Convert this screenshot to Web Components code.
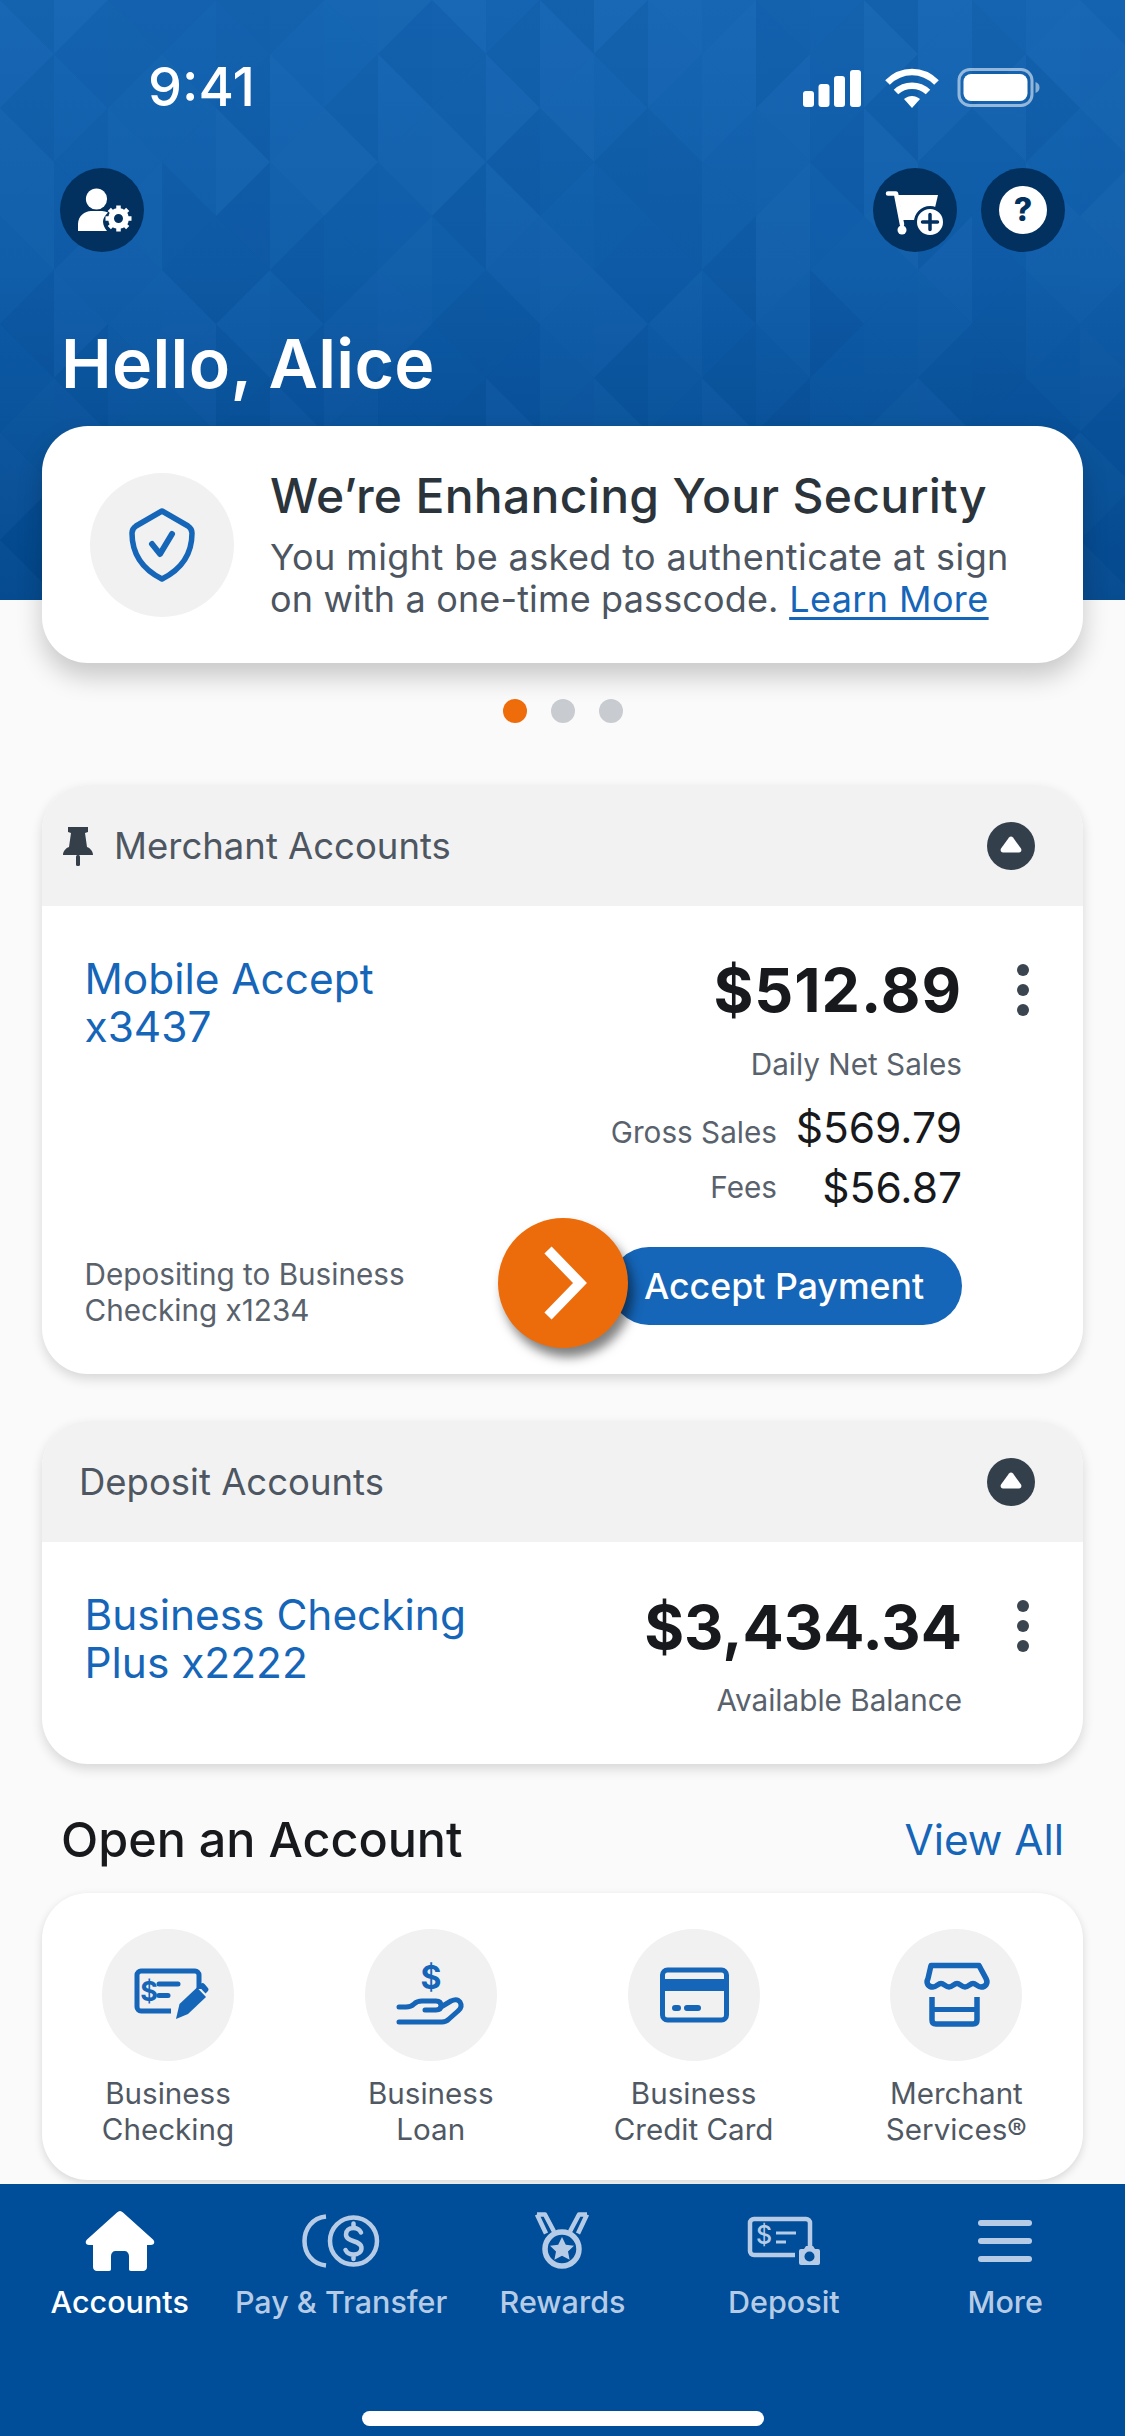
<!DOCTYPE html>
<html lang="en">
<head>
<meta charset="utf-8">
<title>Accounts</title>
<style>
    html, body { margin: 0; padding: 0; }
    body {
        width: 1125px;
        height: 2436px;
        overflow: hidden;
        background: #fafafa;
        font-family: Inter, "Noto Sans", "Liberation Sans", sans-serif;
    }
</style>
</head>
<body>
<app-header name="Alice"></app-header>
<promo-banner>
    <span slot="title">We’re Enhancing Your Security</span>
    <span>You might be asked to authenticate at sign</span><br>
    <span style="letter-spacing:.15px">on with a one-time passcode.</span> <a href="#">Learn More</a>
</promo-banner>
<pager-dots></pager-dots>

<account-card pinned style="--card-top:62px">
    <span slot="heading">Merchant Accounts</span>
    <account-summary style="--pad-bottom:26px;--amount-top:1px;--label-top:22px">
        <span slot="name">Mobile Accept<br>x3437</span>
        <span slot="amount">$512.89</span>
        <span slot="label">Daily Net Sales</span>
        <sale-line label="Gross Sales" value="$569.79" style="margin-top:21px"></sale-line>
        <sale-line label="Fees" value="$56.87" style="margin-top:10px;--lift:-5px"></sale-line>
        <accept-footer>Depositing to Business<br>Checking x1234</accept-footer>
    </account-summary>
</account-card>

<account-card style="--card-top:47px">
    <span slot="heading">Deposit Accounts</span>
    <account-summary style="--pad-bottom:46px;--amount-top:2px;--label-top:21px;--amount-track:0">
        <span slot="name">Business Checking<br>Plus x2222</span>
        <span slot="amount">$3,434.34</span>
        <span slot="label">Available Balance</span>
    </account-summary>
</account-card>

<section-head>
    <span slot="title">Open an Account</span>
    <a slot="action" href="#">View All</a>
</section-head>

<open-panel>
    <product-tile icon="check">Business<br>Checking</product-tile>
    <product-tile icon="loan">Business<br>Loan</product-tile>
    <product-tile icon="card">Business<br>Credit Card</product-tile>
    <product-tile icon="store">Merchant<br>Services®</product-tile>
</open-panel>

<tab-bar>
    <tab-item icon="home" active>Accounts</tab-item>
    <tab-item icon="coins">Pay &amp; Transfer</tab-item>
    <tab-item icon="medal">Rewards</tab-item>
    <tab-item icon="deposit">Deposit</tab-item>
    <tab-item icon="menu">More</tab-item>
</tab-bar>

<script>
const GLYPH = 'font-family="Inter, Liberation Sans, sans-serif"';

const HEADER_ICONS = {
    person: `<circle cx="36.5" cy="31" r="10.6" fill="#fff"/>
        <path d="M18 63V56c0-8 7-13 13-13h11c2 0 4 .5 6 1.500-3 3-5 6-5 9 0 4 2 7 4 9.500z" fill="#fff"/>
        <g fill="none" stroke="#fff"><circle cx="58.500" cy="50.500" r="7.500" stroke-width="6"/>
        <path d="M58.500 37.500v26M45.500 50.500h26M49.300 41.300l18.400 18.400M67.700 41.300L49.300 59.700" stroke-width="4.500" stroke-dasharray="4.500 17 4.500"/></g>`,
    cart: `<path d="M15 25.500h8l6 31" fill="none" stroke="#fff" stroke-width="4.500" stroke-linecap="round" stroke-linejoin="round"/>
        <path d="M25 27h40l-5 21H29z" fill="#fff"/>
        <path d="M29 50h16" stroke="#fff" stroke-width="4"/>
        <circle cx="29" cy="62" r="4.500" fill="#fff"/>
        <circle cx="57" cy="54" r="14.500" fill="#fff" stroke="#02315f" stroke-width="3"/>
        <path d="M57 46.500v15M49.500 54h15" stroke="#02315f" stroke-width="3.500" stroke-linecap="round"/>`,
    help: `<circle cx="42" cy="42" r="24" fill="#fff"/>
        <text x="42" y="53" text-anchor="middle" font-size="32" font-weight="800" fill="#02315f" ${GLYPH}>?</text>`
};

class StatusBar extends HTMLElement {
    constructor() {
        super();
        this.attachShadow({ mode: 'open' });
        this.shadowRoot.innerHTML = `
            <style>
                :host { display: flex; justify-content: space-between; height: 106px; padding: 62px 85px 0 148px; box-sizing: border-box; color: #fff; }
                .time { font-size: 54px; font-weight: 500; line-height: 50px; }
                svg { display: block; margin-top: 5px; }
            </style>
            <div class="time">9:41</div>
            <svg width="237" height="42" viewBox="0 0 237 42">
                <g fill="#fff">
                    <rect x="0" y="24" width="11" height="16" rx="3"/>
                    <rect x="15.500" y="17" width="11" height="23" rx="3"/>
                    <rect x="31" y="9" width="11" height="31" rx="3"/>
                    <rect x="47" y="3" width="11" height="37" rx="3"/>
                </g>
                <g fill="none" stroke="#fff" stroke-width="6.500">
                    <path d="M84.500 15.500c14-14 35-14 49 0"/>
                    <path d="M93 25c9-8.500 23-8.500 32 0"/>
                </g>
                <path d="M101 32c5-4 11-4 16 0l-8 9z" fill="#fff"/>
                <rect x="156" y="2.500" width="73" height="36" rx="11" fill="none" stroke="#fff" stroke-opacity=".55" stroke-width="3"/>
                <rect x="160.500" y="7" width="64" height="27" rx="7.500" fill="#fff"/>
                <path d="M232.500 15c3 1 4 3 4 5.500s-1 4.500-4 5.500z" fill="#fff" fill-opacity=".5"/>
            </svg>
        `;
    }
}

class IconButton extends HTMLElement {
    constructor() {
        super();
        this.attachShadow({ mode: 'open' });
        this.shadowRoot.innerHTML = `
            <style>
                :host { display: block; width: 84px; height: 84px; border-radius: 50%; background: #02315f; }
                svg { display: block; }
            </style>
            <svg width="84" height="84" viewBox="0 0 84 84">${HEADER_ICONS[this.getAttribute('icon')]}</svg>
        `;
    }
}

class AppHeader extends HTMLElement {
    constructor() {
        super();
        this.attachShadow({ mode: 'open' });
        this.shadowRoot.innerHTML = `
            <style>
                :host {
                    display: block;
                    position: relative;
                    height: 600px;
                    overflow: hidden;
                    color: #fff;
                    background: linear-gradient(180deg, #1565b2 0%, #0f5ca8 45%, #03478b 100%);
                }
                .facets { position: absolute; inset: 0; }
                .content { position: relative; }
                .bar { display: flex; justify-content: space-between; margin-top: 62px; padding: 0 60px; }
                .right { display: flex; gap: 24px; }
                h1 { margin: 71px 0 0 61px; font-size: 68px; letter-spacing: .3px; line-height: 80px; font-weight: 600; }
            </style>
            <svg class="facets" width="1125" height="600"></svg>
            <div class="content">
                <status-bar></status-bar>
                <div class="bar">
                    <icon-button icon="person"></icon-button>
                    <div class="right">
                        <icon-button icon="cart"></icon-button>
                        <icon-button icon="help"></icon-button>
                    </div>
                </div>
                <h1>Hello, ${this.getAttribute('name')}</h1>
            </div>
        `;
    }

    connectedCallback() {
        // faint triangle facets, seeded so each photo is the same
        const w = 54, h = 108;
        let seed = 7;
        const next = () => (seed = (seed * 16807) % 2147483647) / 2147483647;
        let out = '';
        for (let c = 0; c * w < 1125 + w; c++) {
            const off = c % 2 ? h / 2 : 0;
            for (let r = -1; r * h < 600; r++) {
                const y = r * h + off, x = c * w;
                const tris = [
                    `${x},${y} ${x},${y + h} ${x + w},${y + h / 2}`,
                    `${x},${y + h} ${x + w},${y + h / 2} ${x + w},${y + h * 1.5}`
                ];
                for (const t of tris) {
                    const v = next();
                    const fill = v < .5 ? '#002a66' : '#5aa0e6';
                    out += `<polygon points="${t}" fill="${fill}" opacity="${(.01 + next() * .055).toFixed(3)}"/>`;
                }
            }
        }
        this.shadowRoot.querySelector('.facets').innerHTML = out;
    }
}

class PromoBanner extends HTMLElement {
    constructor() {
        super();
        this.attachShadow({ mode: 'open' });
        this.shadowRoot.innerHTML = `
            <style>
                :host {
                    display: flex;
                    position: relative;
                    box-sizing: border-box;
                    height: 237px;
                    margin: -174px 42px 0;
                    padding: 47px 0 0 48px;
                    gap: 36px;
                    background: #fff;
                    border-radius: 46px;
                    box-shadow: 0 14px 26px rgba(0, 0, 0, .2);
                    color: #4c5560;
                    font-size: 36px;
                    letter-spacing: .4px;
                    line-height: 42px;
                    white-space: nowrap;
                }
                .badge { flex: none; width: 144px; height: 144px; border-radius: 50%; background: #f1f1f1; display: flex; align-items: center; justify-content: center; }
                .title { color: #2b333b; font-size: 48px; letter-spacing: .3px; line-height: 60px; font-weight: 450; margin: -7px 0 10px; }
                .copy { width: 750px; }
                ::slotted(a) { color: #1565b8; text-decoration: underline; text-underline-offset: 5px; text-decoration-thickness: 3px; }
            </style>
            <div class="badge">
                <svg width="72" height="76" viewBox="0 0 72 76" fill="none" stroke="#1565b8" stroke-width="5.500" stroke-linecap="round" stroke-linejoin="round">
                    <path d="M36 4l26 15c3 2 4 4 4 7 0 20-10 36-30 46C16 62 6 46 6 26c0-3 1-5 4-7z"/>
                    <path d="M26 37l8 10 12-20" stroke-width="6"/>
                </svg>
            </div>
            <div class="copy">
                <div class="title"><slot name="title"></slot></div>
                <slot></slot>
            </div>
        `;
    }
}

class PagerDots extends HTMLElement {
    constructor() {
        super();
        this.attachShadow({ mode: 'open' });
        this.shadowRoot.innerHTML = `
            <style>
                :host { display: flex; justify-content: center; gap: 24px; margin-top: 36px; }
                i { width: 24px; height: 24px; border-radius: 50%; background: #c8ccd1; }
                i:first-of-type { background: #ee6c0a; }
            </style>
            <i></i><i></i><i></i>
        `;
    }
}

class AccountCard extends HTMLElement {
    constructor() {
        super();
        const pinned = this.hasAttribute('pinned');
        this.attachShadow({ mode: 'open' });
        this.shadowRoot.innerHTML = `
            <style>
                :host {
                    display: block;
                    margin: var(--card-top) 42px 0;
                    background: #fff;
                    border-radius: 46px;
                    box-shadow: 0 5px 12px rgba(0, 0, 0, .14);
                }
                .head {
                    display: flex;
                    align-items: center;
                    height: 121px;
                    padding: 0 48px 0 ${pinned ? 20 : 37}px;
                    gap: 20px;
                    background: #f2f2f2;
                    border-radius: 46px 46px 0 0;
                    color: #4d5661;
                    font-size: 36.500px;
                }
                .label { flex: 1; }
                .pin { display: block; }
                .toggle { display: block; }
            </style>
            <div class="head">
                ${pinned ? `<svg class="pin" width="32" height="40" viewBox="0 0 32 40" fill="#343f4a"><path d="M6 1h20v5l-3 1 2 14c3 1 6 4 6 8H1c0-4 3-7 6-8L9 7 6 6z"/><rect x="14" y="29" width="4" height="11" rx="1.500"/></svg>` : ''}
                <div class="label"><slot name="heading"></slot></div>
                <svg class="toggle" width="48" height="48" viewBox="0 0 48 48"><circle cx="24" cy="24" r="24" fill="#33404c"/><path d="M22 15.500c1-1.300 3-1.300 4 0l8 11c1 2 0 4-2 4H16c-2 0-3-2-2-4z" fill="#fff"/></svg>
            </div>
            <slot></slot>
        `;
    }
}

class AccountSummary extends HTMLElement {
    constructor() {
        super();
        this.attachShadow({ mode: 'open' });
        this.shadowRoot.innerHTML = `
            <style>
                :host {
                    display: grid;
                    grid-template-columns: 1fr 121px;
                    padding: 49px 0 var(--pad-bottom) 42.500px;
                }
                .top { display: flex; justify-content: space-between; }
                .name { color: #1565b8; font-size: 42.400px; line-height: 48px; }
                .figures { text-align: right; }
                .amount { color: #17191c; font-size: 61px; letter-spacing: var(--amount-track, 1px); line-height: 68px; font-weight: 700; margin-top: var(--amount-top); }
                .label { color: #59626c; font-size: 29.700px; line-height: 36px; margin-top: var(--label-top); }
                .kebab { display: flex; flex-direction: column; align-items: center; gap: 8px; padding-top: 9px; }
                .kebab i { width: 12px; height: 12px; border-radius: 50%; background: #3a4550; }
            </style>
            <div>
                <div class="top">
                    <div class="name"><slot name="name"></slot></div>
                    <div class="figures">
                        <div class="amount"><slot name="amount"></slot></div>
                        <div class="label"><slot name="label"></slot></div>
                    </div>
                </div>
                <slot></slot>
            </div>
            <div><div class="kebab"><i></i><i></i><i></i></div></div>
        `;
    }
}

class SaleLine extends HTMLElement {
    constructor() {
        super();
        this.attachShadow({ mode: 'open' });
        this.shadowRoot.innerHTML = `
            <style>
                :host { display: grid; grid-template-columns: 1fr 185px; height: 50px; align-items: baseline; text-align: right; }
                .label { color: #59626c; font-size: 29.700px; line-height: 50px; transform: translateY(var(--lift, 0)); }
                .value { color: #17191c; font-size: 42.500px; line-height: 50px; }
            </style>
            <div class="label">${this.getAttribute('label')}</div>
            <div class="value">${this.getAttribute('value')}</div>
        `;
    }
}

class AcceptFooter extends HTMLElement {
    constructor() {
        super();
        this.attachShadow({ mode: 'open' });
        this.shadowRoot.innerHTML = `
            <style>
                :host { display: flex; align-items: center; margin-top: 5px; color: #59626c; font-size: 29.700px; line-height: 36px; }
                .note { flex: 1; padding-top: 17px; }
                .go {
                    position: relative;
                    flex: none;
                    width: 130px;
                    height: 130px;
                    margin-right: -18px;
                    border-radius: 50%;
                    background: #ec6c0b;
                    box-shadow: 5px 9px 11px rgba(0, 0, 0, .5);
                    display: flex;
                    align-items: center;
                    justify-content: center;
                }
                .go svg { display: block; margin-left: 4px; }
                .pill {
                    box-sizing: border-box;
                    width: 352px;
                    height: 78px;
                    padding-left: 34px;
                    margin-top: 6px;
                    border-radius: 39px;
                    background: #1565b8;
                    color: #fff;
                    font-size: 35.700px;
                    font-weight: 500;
                    line-height: 78px;
                }
            </style>
            <div class="note"><slot></slot></div>
            <div class="go">
                <svg width="44" height="74" viewBox="0 0 44 74"><path d="M5 4l32 33L5 70" fill="none" stroke="#fff" stroke-width="10"/></svg>
            </div>
            <div class="pill">Accept Payment</div>
        `;
    }
}

class SectionHead extends HTMLElement {
    constructor() {
        super();
        this.attachShadow({ mode: 'open' });
        this.shadowRoot.innerHTML = `
            <style>
                :host { display: flex; justify-content: space-between; align-items: center; margin-top: 48px; padding: 0 61px; line-height: 56px; }
                .title { color: #17191c; font-size: 48.500px; font-weight: 500; }
                .action { font-size: 42.300px; }
                ::slotted(a) { color: #1565b8; text-decoration: none; }
            </style>
            <div class="title"><slot name="title"></slot></div>
            <div class="action"><slot name="action"></slot></div>
        `;
    }
}

class OpenPanel extends HTMLElement {
    constructor() {
        super();
        this.attachShadow({ mode: 'open' });
        this.shadowRoot.innerHTML = `
            <style>
                :host {
                    display: grid;
                    grid-template-columns: repeat(4, 240px);
                    column-gap: 22.800px;
                    box-sizing: border-box;
                    height: 287px;
                    margin: 25px 42px 0;
                    padding: 36px 0 0 6px;
                    background: #fff;
                    border-radius: 46px;
                    box-shadow: 0 3px 8px rgba(0, 0, 0, .14);
                }
            </style>
            <slot></slot>
        `;
    }
}

const DOLLAR = (x, y, size) => `<text x="${x}" y="${y}" text-anchor="middle" font-size="${size}" font-weight="700" fill="#1565b8" ${GLYPH}>$</text>`;

const TILE_ICONS = {
    check: `<path d="M97 60V46a4 4 0 0 0-4-4H39a4 4 0 0 0-4 4v32a4 4 0 0 0 4 4h30" fill="none" stroke="#1565b8" stroke-width="5"/>
        ${DOLLAR(47, 72, 27)}
        <path d="M57 55h19M57 66.500h9" stroke="#1565b8" stroke-width="5" stroke-linecap="round"/>
        <path d="M74 90l3.500-15L95 58.500l9 9.500-18 17z" fill="#1565b8"/>
        <path d="M96.500 57l2-2q2-2 4 0l3 3.500q2 2 0 4l-2 2z" fill="#1565b8"/>`,
    loan: `${DOLLAR(66, 60, 32)}
        <path d="M34 78h7q5 0 8-3t8-3h14q5 0 5 4.500T71 81H60M76 78l10-6q6-3 9 1 3 5-2 9l-9 8q-3 3-7 3H34" fill="none" stroke="#1565b8" stroke-width="5" stroke-linecap="round" stroke-linejoin="round"/>`,
    card: `<rect x="34.500" y="41" width="64" height="50" rx="5" fill="none" stroke="#1565b8" stroke-width="5"/>
        <rect x="34" y="50" width="66" height="12" fill="#1565b8"/>
        <path d="M47 79h3M59 79h11" stroke="#1565b8" stroke-width="6" stroke-linecap="round"/>`,
    store: `<g fill="none" stroke="#1565b8" stroke-width="5.500" stroke-linecap="round" stroke-linejoin="round">
            <path d="M41 36.500h48l7 13c2.500 5-.5 8.500-5 8.500-3.500 0-5-3.500-8-3.500s-4.500 3.500-8 3.500-5-3.500-8-3.500-4.500 3.500-8 3.500-5-3.500-8-3.500-4.500 3.500-8 3.500c-4.500 0-7.500-3.500-5-8.500z"/>
            <path d="M42 68v23q0 4 4 4h37q4 0 4-4V68" stroke-linecap="butt"/>
        </g>
        <rect x="42" y="78" width="45" height="5" fill="#1565b8"/>`
};

class ProductTile extends HTMLElement {
    constructor() {
        super();
        this.attachShadow({ mode: 'open' });
        this.shadowRoot.innerHTML = `
            <style>
                :host { display: flex; flex-direction: column; align-items: center; text-align: center; color: #4f5863; font-size: 29.600px; line-height: 36px; }
                .disc { width: 132px; height: 132px; border-radius: 50%; background: #f1f1f1; margin-bottom: 14px; }
                svg { display: block; }
            </style>
            <div class="disc"><svg width="132" height="132" viewBox="0 0 132 132">${TILE_ICONS[this.getAttribute('icon')]}</svg></div>
            <div class="text"><slot></slot></div>
        `;
    }
}

// drawn in a 90x62 box, same colour as the label through currentColor
const TAB_ICONS = {
    home: `<path d="M45 1c1 0 2 .5 3 1.500l30 27c2.500 2.500 1 5.500-2 5.500h-4v22c0 2.500-2 4-4 4H56c-1.500 0-2-1-2-2V46c0-3-2-5-4.500-5h-9C38 41 36 43 36 46v13c0 1-.5 2-2 2H22c-2 0-4-1.500-4-4V35h-4c-3 0-4.500-3-2-5.500l30-27c1-1 2-1.500 3-1.500z" fill="currentColor"/>`,
    coins: `<g fill="none" stroke="currentColor" stroke-width="4.500">
            <circle cx="57.500" cy="31" r="23.500"/>
            <path d="M30 6.500C16 8 8.500 19 8.500 31S16 54 30 55.500"/>
            <path d="M65 22.500c-1.500-3-4.500-4.500-7.500-4.500-4.500 0-7.500 2.500-7.500 6.500 0 8.500 15.500 5 15.500 13.500 0 4-3.500 6.500-8 6.500-3.500 0-6.500-1.500-8-4.500M57.500 13.500V18M57.500 44.500v4.500" stroke-linecap="round"/>
        </g>`,
    medal: `<g fill="none" stroke="currentColor" stroke-linejoin="round">
            <path d="M20 4.500h8l9 17M20 4.500l9 19M70 4.500h-8l-9 17M70 4.500l-9 19" stroke-width="4.500"/>
            <circle cx="45" cy="39" r="17" stroke-width="5.500"/>
        </g>
        <path d="M45 27l3.800 7.800 8.200 1-6 5.700 1.600 8.300-7.600-4-7.600 4 1.600-8.300-6-5.700 8.200-1z" fill="currentColor"/>`,
    deposit: `<path d="M71 36V13a4 4 0 0 0-4-4H15a4 4 0 0 0-4 4v28a4 4 0 0 0 4 4h41" fill="none" stroke="currentColor" stroke-width="4.500"/>
        <text x="25" y="34" text-anchor="middle" font-size="25" font-weight="500" fill="currentColor" ${GLYPH}>$</text>
        <path d="M37 23h20M37 32h10" stroke="currentColor" stroke-width="3"/>
        <path d="M60 41q0-2 2-2h3l2-3h7l2 3h3q2 0 2 2v12q0 2-2 2H62q-2 0-2-2z" fill="currentColor"/>
        <circle cx="70.500" cy="46.500" r="5" fill="#004d99"/>`,
    menu: `<g fill="currentColor"><rect x="18" y="10" width="54" height="6" rx="3"/><rect x="18" y="28" width="54" height="6" rx="3"/><rect x="18" y="46" width="54" height="6" rx="3"/></g>`
};

class TabItem extends HTMLElement {
    constructor() {
        super();
        const on = this.hasAttribute('active');
        this.attachShadow({ mode: 'open' });
        this.shadowRoot.innerHTML = `
            <style>
                :host { display: flex; flex-direction: column; align-items: center; color: ${on ? '#fff' : '#b6cce6'}; font-size: 30.500px; font-weight: 500; line-height: 36px; white-space: nowrap; }
                svg { display: block; margin-bottom: 12px; }
            </style>
            <svg width="90" height="62" viewBox="0 0 90 62">${TAB_ICONS[this.getAttribute('icon')]}</svg>
            <slot></slot>
        `;
    }
}

class TabBar extends HTMLElement {
    constructor() {
        super();
        this.attachShadow({ mode: 'open' });
        this.shadowRoot.innerHTML = `
            <style>
                :host { display: block; box-sizing: border-box; height: 252px; margin-top: 4px; padding: 26px 9px 0; background: #004d99; }
                .tabs { display: grid; grid-template-columns: repeat(5, 1fr); }
                .home { width: 402px; height: 15px; margin: 91px auto 0; border-radius: 8px; background: #fff; }
            </style>
            <div class="tabs"><slot></slot></div>
            <div class="home"></div>
        `;
    }
}

customElements.define('status-bar', StatusBar);
customElements.define('icon-button', IconButton);
customElements.define('app-header', AppHeader);
customElements.define('promo-banner', PromoBanner);
customElements.define('pager-dots', PagerDots);
customElements.define('account-card', AccountCard);
customElements.define('account-summary', AccountSummary);
customElements.define('sale-line', SaleLine);
customElements.define('accept-footer', AcceptFooter);
customElements.define('section-head', SectionHead);
customElements.define('open-panel', OpenPanel);
customElements.define('product-tile', ProductTile);
customElements.define('tab-item', TabItem);
customElements.define('tab-bar', TabBar);
</script>
</body>
</html>
